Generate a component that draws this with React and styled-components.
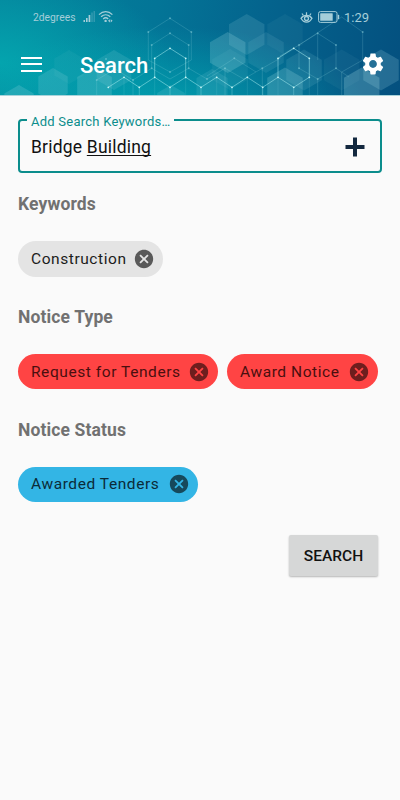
import React from "react";
import styled, { createGlobalStyle } from "styled-components";
import { MdCancel, MdSettings } from "react-icons/md";

const GlobalStyle = createGlobalStyle`
  * {
    box-sizing: border-box;
  }
  body {
    margin: 0;
    background: #fafafa;
    font-family: Roboto, "Liberation Sans", sans-serif;
  }
`;

const Screen = styled.div`
  width: 400px;
  min-height: 800px;
  background: #fafafa;
`;

const Header = styled.header`
  position: relative;
  height: 96px;
  overflow: hidden;
  border-bottom: 1px solid #a9d3da;
  background: radial-gradient(
      ellipse 200px 80px at 42% 112%,
      rgba(0, 174, 182, 0.75),
      rgba(0, 150, 170, 0) 100%
    ),
    radial-gradient(
      ellipse 170px 90px at 0% 66%,
      #04a4ae,
      rgba(4, 150, 170, 0) 100%
    ),
    linear-gradient(100deg, #04849c 0%, #037597 38%, #04638d 65%, #04507f 100%);
`;

const Pattern = styled.svg`
  position: absolute;
  top: 0;
  left: 0;
`;

const StatusBar = styled.div`
  position: relative;
  display: flex;
  justify-content: space-between;
  align-items: center;
  height: 34px;
  padding: 0 31px 0 33px;
  color: #a5ced9;
`;

const StatusGroup = styled.div`
  display: flex;
  align-items: center;
`;

const Carrier = styled.span`
  width: 42px;
  margin-right: 8px;
  font-size: 10.3px;
  white-space: nowrap;
`;

const Clock = styled.span`
  font-size: 13px;
  margin-left: 4px;
`;

const Toolbar = styled.div`
  position: relative;
  display: flex;
  align-items: center;
  height: 60px;
  padding: 0 14px 0 21px;
  color: #fff;
`;

const MenuIcon = styled.div`
  display: flex;
  flex-direction: column;
  justify-content: space-between;
  width: 21px;
  height: 15px;
`;

const MenuLine = styled.span`
  height: 2px;
  background: #fff;
`;

const Title = styled.h1`
  flex: 1;
  margin: 3px 0 0 38px;
  font-size: 22px;
  font-weight: 500;
  line-height: 26px;
`;

const Content = styled.main`
  display: flex;
  flex-direction: column;
  padding: 16px 18px 0;
`;

const Field = styled.fieldset`
  display: flex;
  align-items: center;
  justify-content: space-between;
  height: 61px;
  margin: 0;
  padding: 8px 15px 0 11px;
  border: 2px solid #0b8d8c;
  border-radius: 4px;
`;

const Label = styled.legend`
  height: 16px;
  margin-left: -4px;
  padding: 0 4px;
  font-size: 13px;
  line-height: 19px;
  letter-spacing: 0.24px;
  color: #0b8d8c;
`;

const Value = styled.span`
  font-size: 17.5px;
  line-height: 22px;
  letter-spacing: 0.2px;
  color: #111;
`;

const Typed = styled.span`
  text-decoration: underline;
  text-decoration-thickness: 1px;
  text-decoration-skip-ink: none;
  text-underline-offset: 2px;
`;

const Section = styled.section`
  display: flex;
  flex-direction: column;
  height: 112.8px;
  padding-top: 19px;
`;

const Heading = styled.h2`
  margin: 0;
  font-size: 17.5px;
  font-weight: 700;
  line-height: 24px;
  letter-spacing: 0.13px;
  color: #717171;
`;

const Chips = styled.div`
  display: flex;
  gap: 9px;
  margin-top: 25px;
`;

const ChipBox = styled.div`
  display: flex;
  align-items: center;
  justify-content: space-between;
  width: ${(p) => p.$width}px;
  height: 35.6px;
  padding: 0 8px 0 13px;
  border-radius: 18px;
  background: ${(p) => p.$background};
  color: ${(p) => p.$color};
  font-size: 15.5px;
  letter-spacing: 0.57px;
  white-space: nowrap;
`;

const CloseIcon = styled(MdCancel)`
  flex: none;
  color: ${(p) => p.$color};
`;

const SearchButton = styled.button`
  align-self: flex-end;
  width: 89px;
  height: 41px;
  margin: 24px 4px 0 0;
  padding: 0;
  border: 0;
  border-radius: 2px;
  background: #d6d7d7;
  box-shadow: 0 1px 2px rgba(0, 0, 0, 0.28);
  font-family: inherit;
  font-size: 15.5px;
  font-weight: 500;
  color: #111;
`;

const tones = {
  grey: { background: "#e4e4e4", color: "#1c1c1c", icon: "#595959" },
  red: { background: "#ff4444", color: "#4a0f0f", icon: "#6e1e1e" },
  blue: { background: "#33b5e5", color: "#0b2b38", icon: "#16495b" },
};

const sections = [
  {
    title: "Keywords",
    chips: [{ name: "Construction", tone: "grey", width: 145 }],
  },
  {
    title: "Notice Type",
    chips: [
      { name: "Request for Tenders", tone: "red", width: 200 },
      { name: "Award Notice", tone: "red", width: 151 },
    ],
  },
  {
    title: "Notice Status",
    chips: [{ name: "Awarded Tenders", tone: "blue", width: 180 }],
  },
];

// cx, cy, radius, opacity
const hexagons = [
  [19, 102, 17, 0.2],
  [53, 85, 17, 0.17],
  [69, 67, 17, 0.06],
  [94.5, 87, 20, 0.19],
  [114, 70, 20, 0.14],
  [171, 101, 16, 0.14],
  [212, 87, 18, 0.12],
  [230, 69.5, 20.5, 0.07],
  [246.7, 34.5, 20.5, 0.15],
  [227.7, 52.5, 20.5, 0.22],
  [266, 52.5, 20.5, 0.11],
  [285, 34.5, 20.5, 0.06],
  [285, 88, 20.5, 0.22],
  [304, 70, 20.5, 0.12],
  [341.7, 70, 20.5, 0.06],
  [361.7, 88, 20.5, 0.26],
  [381, 70, 20.5, 0.2],
];

const hexPoints = (cx, cy, r) => {
  const w = r * 0.866;
  return [
    [cx, cy - r],
    [cx + w, cy - r / 2],
    [cx + w, cy + r / 2],
    [cx, cy + r],
    [cx - w, cy + r / 2],
    [cx - w, cy - r / 2],
  ].join(" ");
};

const brightNodes = [
  [124, 77.3],
  [154.7, 77.3],
  [154.7, 58.3],
  [170, 48.3],
  [185.7, 58.3],
  [185.7, 77.3],
  [216.7, 77.3],
  [247.3, 77.3],
  [278, 77.3],
  [278, 58.3],
  [293.7, 48.3],
  [309.3, 58.3],
  [309.3, 77.3],
  [108.3, 87.3],
  [139.3, 87.3],
  [170, 87.3],
  [201, 87.3],
  [232, 87.3],
  [262.7, 87.3],
  [293.7, 87.3],
];

const dimNodes = [
  [148.3, 32],
  [170, 18.3],
  [191.3, 32],
  [151.7, 45],
  [170, 33.3],
  [188.7, 45],
  [151.7, 68.3],
  [188.7, 68.3],
  [170, 72],
  [96.7, 80],
  [106, 59],
  [133, 80],
  [225, 68.3],
  [234.3, 58.3],
  [262.3, 68.3],
  [299, 45],
  [317.7, 33.3],
  [336, 45],
  [336, 68.3],
  [317.7, 79],
  [299, 68.3],
  [362.7, 32],
  [207, 79],
];

const HeaderPattern = () => (
  <Pattern width="400" height="96" viewBox="0 0 400 96" fill="none">
    {hexagons.map(([cx, cy, r, opacity], i) => (
      <polygon
        key={i}
        points={hexPoints(cx, cy, r)}
        fill="#a5dde5"
        fillOpacity={opacity}
      />
    ))}
    <g stroke="#9be0e6" strokeWidth="0.6" strokeOpacity="0.32">
      <path d="M148.3 60V32L170 18.3 191.3 32V60M148.3 60L170 72 191.3 60" />
      <path d="M151.7 68.3V45L170 33.3 188.7 45V68.3L170 79 151.7 68.3" />
      <path d="M96.7 95V80L115 69 133 80V95M133 80L151.7 68.3" />
      <path d="M188.7 68.3L207 79 225 68.3 243.7 79 262.3 68.3 280.5 58" />
      <path d="M207 76L234.3 58.3 256 72M225 68.3V95M262.3 68.3V95" />
      <path d="M299 68.3V45L317.7 33.3 336 45V68.3L317.7 79 299 68.3M317.7 79V95" />
      <path d="M299 45L341.7 17 362.7 32V60M317.7 33.3V60M341.7 72V95" />
      <path d="M336 68.3L349 77M341.7 72L362.7 60M280 56L299 45" />
    </g>
    <path
      d="M108.3 87.3L124 77.3 139.3 87.3 154.7 77.3V58.3L170 48.3 185.7 58.3V77.3L201 87.3 216.7 77.3 232 87.3 247.3 77.3 262.7 87.3 278 77.3V58.3L293.7 48.3 309.3 58.3V77.3L293.7 87.3 278 77.3M154.7 77.3L170 87.3 185.7 77.3"
      stroke="#a8eef0"
      strokeWidth="0.8"
      strokeOpacity="0.65"
    />
    <path
      d="M139.3 87.3V95M170 87.3V95M201 87.3V95M232 87.3V95M262.7 87.3V95M293.7 87.3V95"
      stroke="#a8eef0"
      strokeWidth="0.6"
      strokeOpacity="0.5"
    />
    <path
      d="M124 77.3V95M154.7 77.3V95M185.7 77.3V95M216.7 77.3V95M247.3 77.3V95M278 77.3V95M309.3 77.3V95"
      stroke="#a8eef0"
      strokeWidth="0.6"
      strokeOpacity="0.2"
    />
    {dimNodes.map(([x, y], i) => (
      <circle key={i} cx={x} cy={y} r="1" fill="#8fd6e0" fillOpacity="0.5" />
    ))}
    {brightNodes.map(([x, y], i) => (
      <circle key={i} cx={x} cy={y} r="0.9" fill="#c9f7f7" />
    ))}
  </Pattern>
);

const SignalIcons = () => (
  <svg width="32" height="14" viewBox="0 0 32 14" fill="none">
    <g fill="currentColor">
      <rect x="0.5" y="10" width="1.5" height="2" />
      <rect x="3" y="8" width="1.6" height="4" />
      <rect x="5.6" y="5" width="1.7" height="7" />
      <rect x="8.4" y="2.5" width="1.2" height="9.5" opacity="0.35" />
      <rect x="10.6" y="1" width="1.2" height="11" opacity="0.35" />
      <circle cx="22.6" cy="10.9" r="1.2" />
    </g>
    <g stroke="currentColor" strokeWidth="1.3">
      <path d="M16 4.6C20 .7 25.4 .7 29.4 4.6" />
      <path d="M18.1 6.8C20.8 4.2 24.6 4.2 27.3 6.8" />
      <path d="M20.2 9C21.7 7.5 23.7 7.5 25.2 9" />
    </g>
    <path
      d="M25 10.8l1.9-1.6v3.2zM29.6 10.8l-1.9-1.6v3.2z"
      fill="currentColor"
    />
  </svg>
);

const EyeIcon = () => (
  <svg width="13" height="13" viewBox="0 0 13 13" fill="none">
    <path
      d="M1 7.3C3.8 3.3 9.2 3.3 12 7.3 9.2 12.5 3.8 12.5 1 7.3z"
      stroke="currentColor"
      strokeWidth="1.3"
    />
    <circle cx="6.5" cy="7.5" r="2" stroke="currentColor" strokeWidth="1.3" />
    <path
      d="M6.5 1.2V4M2 2.5l1.4 2M11 2.5L9.6 4.5"
      stroke="currentColor"
      strokeWidth="1.2"
    />
  </svg>
);

const Battery = styled.svg`
  margin-left: 5px;
`;

const BatteryIcon = () => (
  <Battery width="22" height="12" viewBox="0 0 22 12">
    <rect
      x="0.6"
      y="0.6"
      width="18.4"
      height="10.8"
      rx="1.8"
      fill="none"
      stroke="currentColor"
      strokeWidth="1"
    />
    <rect x="2.2" y="2.2" width="12.5" height="7.6" rx="0.6" fill="currentColor" />
    <rect x="19.8" y="3.8" width="1.4" height="4.4" rx="0.6" fill="currentColor" />
  </Battery>
);

const PlusIcon = () => (
  <svg width="20" height="20" viewBox="0 0 20 20">
    <path
      d="M8 .5h4v7.5h7.5v4H12v7.5H8V12H.5V8H8z"
      fill="#13283f"
    />
  </svg>
);

const Chip = ({ name, tone, width }) => {
  const { background, color, icon } = tones[tone];
  return (
    <ChipBox $width={width} $background={background} $color={color}>
      {name}
      <CloseIcon size={22} $color={icon} />
    </ChipBox>
  );
};

const App = () => {
  return (
    <Screen>
      <GlobalStyle />
      <Header>
        <HeaderPattern />
        <StatusBar>
          <StatusGroup>
            <Carrier>2degrees</Carrier>
            <SignalIcons />
          </StatusGroup>
          <StatusGroup>
            <EyeIcon />
            <BatteryIcon />
            <Clock>1:29</Clock>
          </StatusGroup>
        </StatusBar>
        <Toolbar>
          <MenuIcon>
            <MenuLine />
            <MenuLine />
            <MenuLine />
          </MenuIcon>
          <Title>Search</Title>
          <MdSettings size={26} />
        </Toolbar>
      </Header>
      <Content>
        <Field>
          <Label>Add Search Keywords…</Label>
          <Value>
            Bridge <Typed>Building</Typed>
          </Value>
          <PlusIcon />
        </Field>
        {sections.map(({ title, chips }) => (
          <Section key={title}>
            <Heading>{title}</Heading>
            <Chips>
              {chips.map((chip) => (
                <Chip key={chip.name} {...chip} />
              ))}
            </Chips>
          </Section>
        ))}
        <SearchButton>SEARCH</SearchButton>
      </Content>
    </Screen>
  );
};

export default App;
